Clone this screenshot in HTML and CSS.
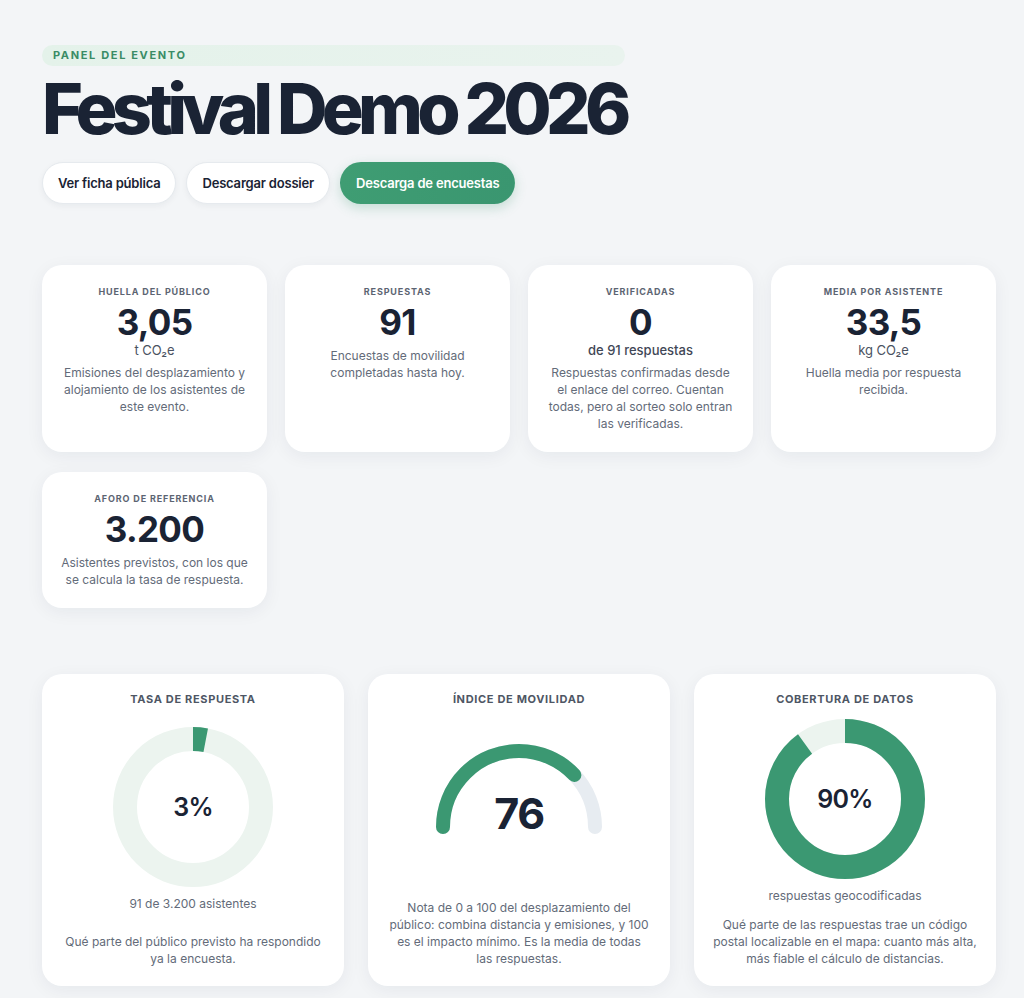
FILE: index.html
```html
<!DOCTYPE html>
<html lang="es">
<head>
<meta charset="utf-8">
<title>Festival Demo 2026</title>
<link rel="stylesheet" href="styles.css">
</head>
<body>
<main class="page">
  <header class="hero">
    <div class="eyebrow">PANEL DEL EVENTO</div>
    <h1 class="title">Festival Demo 2026</h1>
    <div class="actions">
      <a class="btn">Ver ficha pública</a>
      <a class="btn">Descargar dossier</a>
      <a class="btn btn-primary">Descarga de encuestas</a>
    </div>
  </header>

  <section class="stats">
    <div class="stat">
      <div class="stat-label">HUELLA DEL PÚBLICO</div>
      <div class="stat-value">3,05</div>
      <div class="stat-unit">t CO₂e</div>
      <p class="stat-desc">Emisiones del desplazamiento y alojamiento de los asistentes de este evento.</p>
    </div>
    <div class="stat">
      <div class="stat-label">RESPUESTAS</div>
      <div class="stat-value">91</div>
      <p class="stat-desc">Encuestas de movilidad completadas hasta hoy.</p>
    </div>
    <div class="stat">
      <div class="stat-label">VERIFICADAS</div>
      <div class="stat-value">0</div>
      <div class="stat-sub">de 91 respuestas</div>
      <p class="stat-desc">Respuestas confirmadas desde el enlace del correo. Cuentan todas, pero al sorteo solo entran las verificadas.</p>
    </div>
    <div class="stat">
      <div class="stat-label">MEDIA POR ASISTENTE</div>
      <div class="stat-value">33,5</div>
      <div class="stat-unit">kg CO₂e</div>
      <p class="stat-desc">Huella media por respuesta recibida.</p>
    </div>
    <div class="stat">
      <div class="stat-label">AFORO DE REFERENCIA</div>
      <div class="stat-value">3.200</div>
      <p class="stat-desc">Asistentes previstos, con los que se calcula la tasa de respuesta.</p>
    </div>
  </section>

  <section class="charts">
    <div class="gcard">
      <div class="gcard-label">TASA DE RESPUESTA</div>
      <div class="gcard-body">
        <div class="donut">
          <svg width="160" height="160" viewBox="0 0 160 160">
            <circle cx="80" cy="80" r="68" fill="none" stroke="#ecf4ef" stroke-width="24"/>
            <circle cx="80" cy="80" r="68" fill="none" stroke="#3b9872" stroke-width="24" pathLength="100" stroke-dasharray="3 100" transform="rotate(-90 80 80)"/>
          </svg>
          <span class="donut-value">3%</span>
        </div>
        <div class="gcard-caption">91 de 3.200 asistentes</div>
      </div>
      <p class="gcard-desc">Qué parte del público previsto ha respondido ya la encuesta.</p>
    </div>

    <div class="gcard">
      <div class="gcard-label">ÍNDICE DE MOVILIDAD</div>
      <div class="gcard-body">
        <div class="gauge">
          <svg width="180" height="122" viewBox="0 0 180 122">
            <path d="M14 85 A76 76 0 0 1 166 85" fill="none" stroke="#e7ecf1" stroke-width="14" stroke-linecap="round"/>
            <path d="M14 85 A76 76 0 0 1 166 85" fill="none" stroke="#3b9872" stroke-width="14" stroke-linecap="round" pathLength="100" stroke-dasharray="76 100"/>
          </svg>
          <span class="gauge-value">76</span>
        </div>
      </div>
      <p class="gcard-desc">Nota de 0 a 100 del desplazamiento del público: combina distancia y emisiones, y 100 es el impacto mínimo. Es la media de todas<br>las respuestas.</p>
    </div>

    <div class="gcard">
      <div class="gcard-label">COBERTURA DE DATOS</div>
      <div class="gcard-body">
        <div class="donut">
          <svg width="160" height="160" viewBox="0 0 160 160">
            <circle cx="80" cy="80" r="68" fill="none" stroke="#ecf4ef" stroke-width="24"/>
            <circle cx="80" cy="80" r="68" fill="none" stroke="#3b9872" stroke-width="24" pathLength="100" stroke-dasharray="90 100" transform="rotate(-90 80 80)"/>
          </svg>
          <span class="donut-value">90%</span>
        </div>
        <div class="gcard-caption">respuestas geocodificadas</div>
      </div>
      <p class="gcard-desc">Qué parte de las respuestas trae un código postal localizable en el mapa: cuanto más alta, más fiable el cálculo de distancias.</p>
    </div>
  </section>
</main>
</body>
</html>
```

FILE: styles.css
```css
* { box-sizing: border-box; }

html, body {
  margin: 0;
  padding: 0;
  background: #f3f5f7;
  font-family: Inter, "Noto Sans", "Liberation Sans", sans-serif;
  color: #1a2334;
}

.page {
  padding: 43px 28px 40px 42px;
}

.hero {
  display: inline-flex;
  flex-direction: column;
  align-items: stretch;
}

.eyebrow {
  height: 21px;
  line-height: 21px;
  padding: 0 11px;
  border-radius: 999px;
  background: linear-gradient(90deg, #e4f2ea 0%, #e9f3ee 100%);
  color: #3a8c66;
  font-size: 11px;
  font-weight: 700;
  letter-spacing: 0.15em;
}

.title {
  margin: 8px 0 0 0;
  font-size: 70px;
  line-height: 70px;
  font-weight: 800;
  letter-spacing: -0.082em;
  color: #1a2334;
  white-space: nowrap;
}

.actions {
  display: flex;
  gap: 10px;
  margin-top: 18px;
}

.btn {
  display: inline-flex;
  align-items: center;
  height: 42px;
  padding: 0 15px;
  border-radius: 999px;
  background: #ffffff;
  border: 1px solid #e6eaee;
  box-shadow: 0 2px 6px rgba(20, 35, 55, 0.05);
  font-size: 13px;
  font-weight: 600;
  color: #1a2334;
  letter-spacing: -0.015em;
}

.btn-primary {
  background: linear-gradient(90deg, #3f9d73 0%, #3a9670 100%);
  border-color: transparent;
  color: #ffffff;
  box-shadow: 0 4px 12px rgba(58, 150, 112, 0.25);
}

.stats {
  margin-top: 61px;
  display: grid;
  grid-template-columns: repeat(4, 1fr);
  column-gap: 18px;
  row-gap: 20px;
}

.stat {
  background: #ffffff;
  border-radius: 20px;
  padding: 20px 18px 20px;
  text-align: center;
  box-shadow: 0 4px 18px rgba(25, 40, 60, 0.06);
}

.stat-label {
  font-size: 9px;
  line-height: 14px;
  font-weight: 700;
  letter-spacing: 0.095em;
  color: #5c6472;
}

.stat-value {
  margin-top: 4px;
  font-size: 35px;
  line-height: 39px;
  font-weight: 700;
  letter-spacing: -0.02em;
  color: #1a2334;
}

.stat-unit {
  font-size: 13px;
  line-height: 17px;
  color: #4a5261;
}

.stat-sub {
  font-size: 13px;
  line-height: 17px;
  font-weight: 500;
  color: #3f4756;
}

.stat-desc {
  margin: 5px 0 0 0;
  font-size: 12px;
  line-height: 17px;
  color: #636b79;
}

.charts {
  margin-top: 66px;
  display: grid;
  grid-template-columns: repeat(3, 1fr);
  gap: 24px;
}

.gcard {
  min-height: 312px;
  background: #ffffff;
  border-radius: 20px;
  padding: 18px 18px 19px;
  text-align: center;
  display: flex;
  flex-direction: column;
  box-shadow: 0 4px 18px rgba(25, 40, 60, 0.06);
}

.gcard-label {
  font-size: 11px;
  line-height: 14px;
  font-weight: 700;
  letter-spacing: 0.06em;
  color: #4e5664;
}

.gcard-body {
  flex: 1;
  display: flex;
  flex-direction: column;
  align-items: center;
  justify-content: center;
}

.donut {
  position: relative;
  width: 160px;
  height: 160px;
}

.donut svg, .gauge svg { display: block; }

.donut-value {
  position: absolute;
  inset: 0;
  display: flex;
  align-items: center;
  justify-content: center;
  font-size: 25px;
  font-weight: 600;
  letter-spacing: -0.03em;
  color: #1a2334;
}

.gauge {
  position: relative;
  width: 180px;
  height: 122px;
}

.gauge-value {
  position: absolute;
  left: 0;
  right: 0;
  top: 46px;
  line-height: 50px;
  font-size: 43px;
  font-weight: 700;
  letter-spacing: -0.03em;
  color: #1a2334;
}

.gcard-caption {
  margin-top: 8px;
  font-size: 12px;
  line-height: 17px;
  color: #636b79;
}

.gcard-desc {
  margin: 0;
  font-size: 12px;
  line-height: 17px;
  color: #636b79;
}
```
